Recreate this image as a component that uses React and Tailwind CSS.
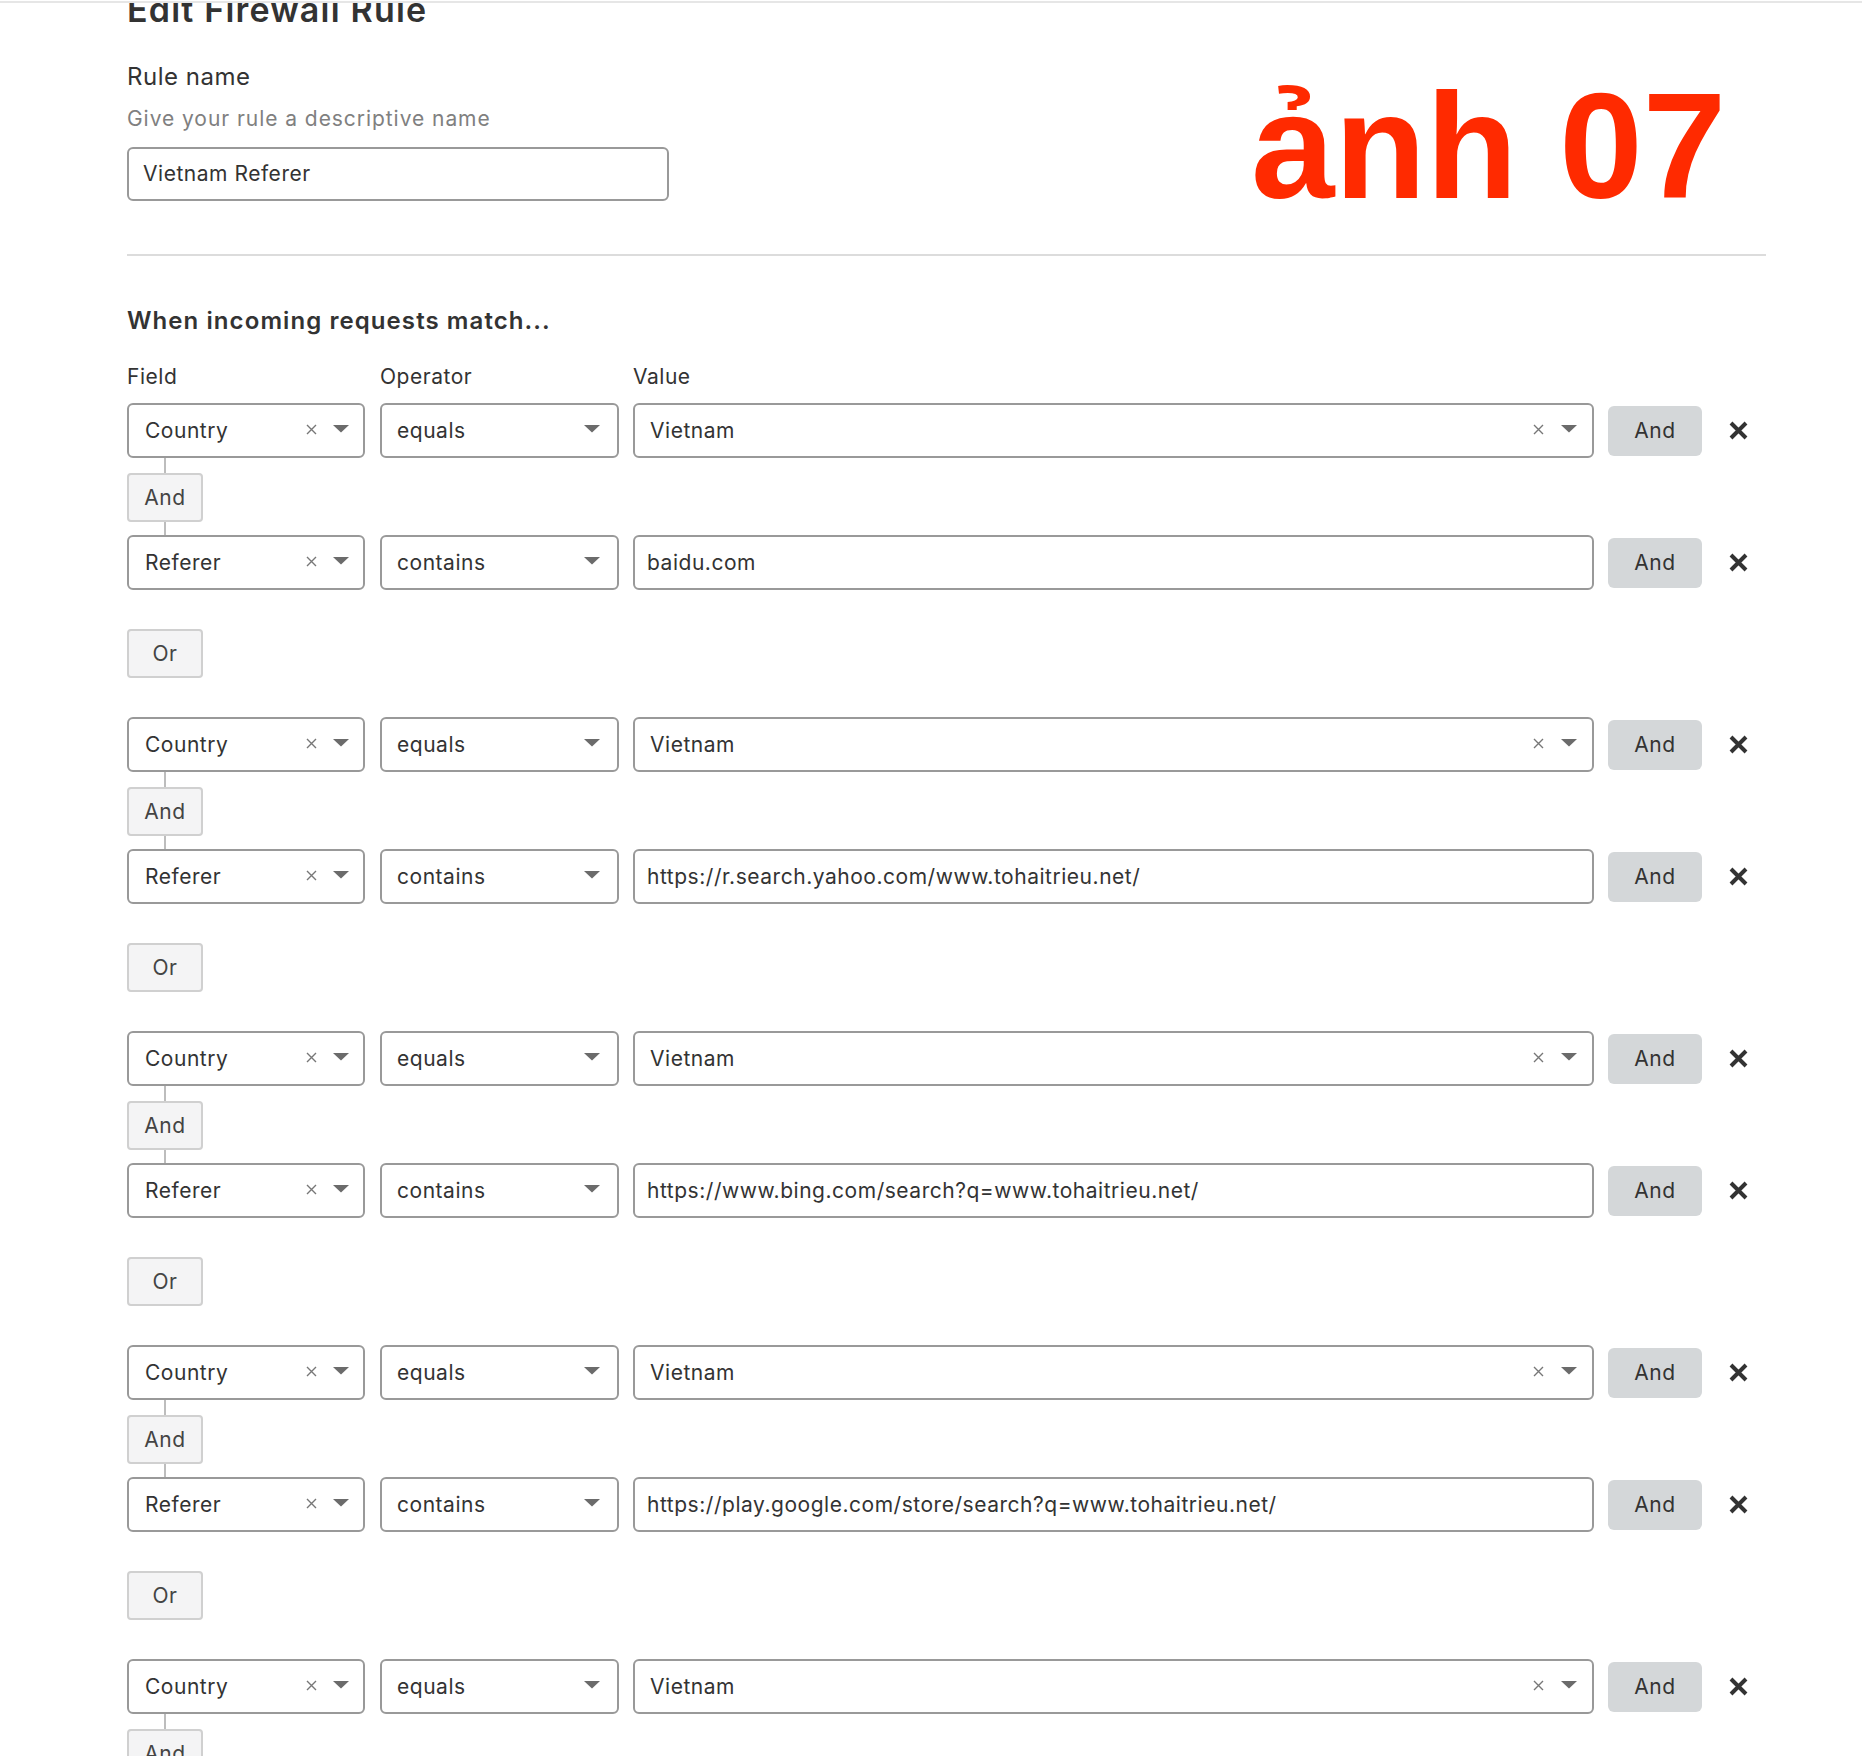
import React from "react";

const groups = [
  "baidu.com",
  "https://r.search.yahoo.com/www.tohaitrieu.net/",
  "https://www.bing.com/search?q=www.tohaitrieu.net/",
  "https://play.google.com/store/search?q=www.tohaitrieu.net/",
  "",
];

const Caret = () => (
  <svg width="16" height="8" viewBox="0 0 16 8" className="-mt-[3px] shrink-0">
    <polygon points="0,0 16,0 8,7.5" fill="#6b6b6b" />
  </svg>
);

const Clear = () => (
  <svg width="11" height="11" viewBox="0 0 11 11" className="-mt-[2px] shrink-0">
    <path d="M1 1L10 10M10 1L1 10" stroke="#777" strokeWidth="1.4" />
  </svg>
);

const Remove = () => (
  <svg width="21" height="19" viewBox="0 0 21 19">
    <path d="M3 2L18 17M18 2L3 17" stroke="#333" strokeWidth="4" />
  </svg>
);

const Chip = ({ children }) => (
  <div className="flex h-[49px] w-[76px] items-center justify-center rounded-[4px] border-2 border-[#d0d0d0] bg-[#f4f4f5] text-[21px] text-[#444]">
    {children}
  </div>
);

// one condition line: field, operator, value, and/remove
const Condition = ({ field, op, value, select }) => (
  <div className="flex h-[55px] items-center">
    <div className="flex h-full w-[238px] items-center rounded-[6px] border-2 border-[#999] pl-[16px] pr-[14px] text-[21px] text-[#333]">
      <span className="flex-1">{field}</span>
      <Clear />
      <span className="ml-[16px] flex"><Caret /></span>
    </div>
    <div className="ml-[15px] flex h-full w-[239px] items-center rounded-[6px] border-2 border-[#999] pl-[15px] pr-[17px] text-[21px] text-[#333]">
      <span className="flex-1">{op}</span>
      <Caret />
    </div>
    <div
      className={`ml-[14px] flex h-full w-[961px] items-center rounded-[6px] border-2 border-[#999] pr-[15px] text-[21px] text-[#333] ${select ? "pl-[15px]" : "pl-[12px]"}`}
    >
      <span className="flex-1">{value}</span>
      {select && (
        <>
          <Clear />
          <span className="ml-[17px] flex"><Caret /></span>
        </>
      )}
    </div>
    <button className="ml-[14px] h-[50px] w-[94px] rounded-[6px] bg-[#d4d7d9] text-[21px] text-[#333]">And</button>
    <span className="ml-[26px] flex items-center"><Remove /></span>
  </div>
);

export default function App() {
  return (
    <div className="relative h-[1756px] overflow-hidden bg-white font-['Inter',sans-serif] tracking-[0.033em] text-[#333]">
      <div className="mt-[1px] h-[2px] bg-[#e6e6e6]" />
      <div className="pl-[127px] pr-[96px]">
        <div className="flex h-[24px] items-end overflow-hidden">
          <h1 className="text-[34px] font-semibold leading-none tracking-[0.035em] text-[#333]">Edit Firewall Rule</h1>
        </div>

        <div className="mt-[36px] text-[24px] leading-[28px]">Rule name</div>
        <div className="mt-[15px] text-[21px] leading-[26px] tracking-[0.045em] text-[#808080]">Give your rule a descriptive name</div>
        <div className="mt-[15px] flex h-[54px] w-[542px] items-center rounded-[6px] border-2 border-[#999] pl-[14px] text-[21px]">
          Vietnam Referer
        </div>

        <div className="mt-[53px] h-[2px] bg-[#dcdcdc]" />

        <div className="mt-[51px] text-[24px] font-semibold leading-[28px] tracking-[0.045em]">When incoming requests match...</div>

        <div className="mt-[29px] flex text-[21px] leading-[26px]">
          <span className="w-[253px]">Field</span>
          <span className="w-[253px]">Operator</span>
          <span>Value</span>
        </div>

        <div className="mt-[13px]">
          {groups.map((v, i) => (
            <div key={i}>
              <Condition field="Country" op="equals" value="Vietnam" select />
              <div className="flex w-[76px] flex-col items-center">
                <div className="h-[15px] w-[2px] bg-[#bdbdbd]" />
                <Chip>And</Chip>
                <div className="h-[13px] w-[2px] bg-[#bdbdbd]" />
              </div>
              <Condition field="Referer" op="contains" value={v} />
              <div className="my-[39px]">
                <Chip>Or</Chip>
              </div>
            </div>
          ))}
        </div>
      </div>

      <div className="absolute left-[1251px] top-[71px] font-['Liberation_Sans',sans-serif] text-[150px] font-bold leading-none tracking-normal text-[#ff2a00]">
        ảnh 07
      </div>
    </div>
  );
}
